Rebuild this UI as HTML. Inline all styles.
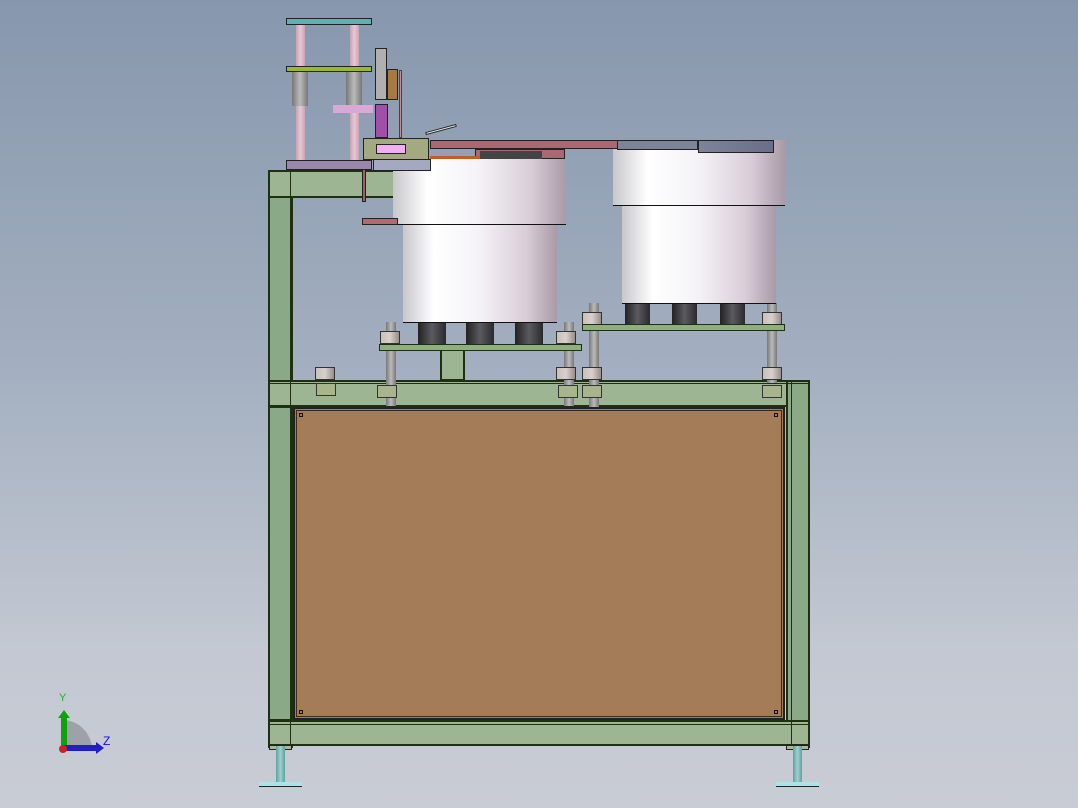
<!DOCTYPE html>
<html><head><style>
html,body{margin:0;padding:0}
body{width:1078px;height:808px;position:relative;overflow:hidden;background:linear-gradient(#8797ad 0%,#a3afc0 45%,#c3c8d2 80%,#c9ccd5 100%);font-family:"Liberation Sans",sans-serif}
.a{position:absolute;box-sizing:border-box}
.g{background:#9db592;border:2px solid #1f2f12}
.gd{background:#8aa987;border:2px solid #1f2f12}
.cyl{background:linear-gradient(90deg,#c8c8cc 0%,#fff 20%,#f4f2f6 50%,#d9cdd8 80%,#a89aa6 100%);border-bottom:1.5px solid #111}
.foot{background:linear-gradient(90deg,#222 0%,#5a5a60 50%,#2a2a2e 100%)}
.nut{background:linear-gradient(90deg,#c9c0bc,#d8d0cc 50%,#9a8c8c);border:1px solid #333}
.bolt{background:linear-gradient(90deg,#777,#bbb 50%,#777)}
.ln{position:absolute;background:#1f2f12}
</style></head><body>

<!-- frame -->
<div class="a gd" style="left:268px;top:170px;width:25px;height:578px"></div>
<div class="a g" style="left:268px;top:170px;width:130px;height:28px"></div>
<div class="a g" style="left:268px;top:380px;width:542px;height:27px"></div>
<div class="a gd" style="left:268px;top:406px;width:25px;height:315px"></div>
<div class="a gd" style="left:786px;top:380px;width:24px;height:368px"></div>
<div class="a g" style="left:268px;top:720px;width:542px;height:26px"></div>
<div class="ln" style="left:290px;top:172px;width:1px;height:574px"></div>
<div class="ln" style="left:270px;top:383px;width:538px;height:1px"></div>
<div class="ln" style="left:791px;top:382px;width:1px;height:364px"></div>
<div class="ln" style="left:270px;top:724px;width:538px;height:1px"></div>
<div class="a" style="left:293px;top:407px;width:492px;height:313px;background:#a47c58;border:2px solid #222"></div>
<div class="a" style="left:296px;top:410px;width:486px;height:307px;border:1px solid #3a2a18"></div>
<div class="a" style="left:299px;top:413px;width:4px;height:4px;border:1px solid #111"></div>
<div class="a" style="left:774px;top:413px;width:4px;height:4px;border:1px solid #111"></div>
<div class="a" style="left:299px;top:710px;width:4px;height:4px;border:1px solid #111"></div>
<div class="a" style="left:774px;top:710px;width:4px;height:4px;border:1px solid #111"></div>
<div class="a g" style="left:440px;top:345px;width:25px;height:36px"></div>

<!-- feet -->
<div class="a" style="left:269px;top:745px;width:23px;height:5px;border:1px solid #222;background:#a6b898"></div>
<div class="a" style="left:786px;top:745px;width:23px;height:5px;border:1px solid #222;background:#a6b898"></div>
<div class="a" style="left:276px;top:746px;width:9px;height:36px;background:linear-gradient(90deg,#5fa09e,#9fd0d0,#5fa09e)"></div>
<div class="a" style="left:259px;top:782px;width:43px;height:5px;background:#a9e4e8;border-bottom:1.5px solid #222"></div>
<div class="a" style="left:793px;top:746px;width:9px;height:36px;background:linear-gradient(90deg,#5fa09e,#9fd0d0,#5fa09e)"></div>
<div class="a" style="left:776px;top:782px;width:43px;height:5px;background:#a9e4e8;border-bottom:1.5px solid #222"></div>

<!-- bolts & nuts -->
<div class="a bolt" style="left:386px;top:322px;width:10px;height:84px"></div>
<div class="a bolt" style="left:564px;top:322px;width:10px;height:84px"></div>
<div class="a bolt" style="left:589px;top:303px;width:10px;height:104px"></div>
<div class="a bolt" style="left:767px;top:303px;width:10px;height:80px"></div>
<div class="a nut" style="left:380px;top:331px;width:20px;height:13px"></div>
<div class="a nut" style="left:556px;top:331px;width:20px;height:13px"></div>
<div class="a nut" style="left:582px;top:312px;width:20px;height:13px"></div>
<div class="a nut" style="left:762px;top:312px;width:20px;height:13px"></div>
<div class="a nut" style="left:315px;top:367px;width:20px;height:13px"></div>
<div class="a nut" style="left:556px;top:367px;width:20px;height:13px"></div>
<div class="a nut" style="left:582px;top:367px;width:20px;height:13px"></div>
<div class="a nut" style="left:762px;top:367px;width:20px;height:13px"></div>
<div class="a" style="left:316px;top:383px;width:20px;height:13px;background:#a8b48c;border:1px solid #333"></div>
<div class="a" style="left:377px;top:385px;width:20px;height:13px;background:#a8b48c;border:1px solid #333"></div>
<div class="a" style="left:558px;top:385px;width:20px;height:13px;background:#a8b48c;border:1px solid #333"></div>
<div class="a" style="left:582px;top:385px;width:20px;height:13px;background:#a8b48c;border:1px solid #333"></div>
<div class="a" style="left:762px;top:385px;width:20px;height:13px;background:#a8b48c;border:1px solid #333"></div>

<!-- left hopper -->
<div class="a foot" style="left:418px;top:321px;width:28px;height:24px"></div>
<div class="a foot" style="left:466px;top:321px;width:28px;height:24px"></div>
<div class="a foot" style="left:515px;top:321px;width:28px;height:24px"></div>
<div class="a g" style="left:379px;top:344px;width:203px;height:7px;background:#8fb07e;border-width:1.5px"></div>
<div class="a cyl" style="left:403px;top:224px;width:154px;height:99px"></div>
<div class="a cyl" style="left:393px;top:159px;width:173px;height:66px"></div>

<!-- right hopper -->
<div class="a foot" style="left:625px;top:302px;width:25px;height:24px"></div>
<div class="a foot" style="left:672px;top:302px;width:25px;height:24px"></div>
<div class="a foot" style="left:720px;top:302px;width:25px;height:24px"></div>
<div class="a g" style="left:582px;top:324px;width:203px;height:7px;background:#8fb07e;border-width:1.5px"></div>
<div class="a cyl" style="left:622px;top:204px;width:154px;height:100px"></div>
<div class="a cyl" style="left:613px;top:140px;width:172px;height:66px"></div>
<div class="a" style="left:617px;top:140px;width:81px;height:10px;background:#7c849a;border:1px solid #222"></div>
<div class="a" style="left:698px;top:140px;width:76px;height:13px;background:linear-gradient(90deg,#7c849a,#6a6e88);border:1px solid #222"></div>

<!-- rail -->
<div class="a" style="left:430px;top:140px;width:188px;height:9px;background:#a86a72;border:1px solid #222"></div>
<div class="a" style="left:475px;top:149px;width:90px;height:10px;background:#a86a72;border:1px solid #222"></div>
<div class="a" style="left:480px;top:151px;width:62px;height:8px;background:#444"></div>
<div class="a" style="left:430px;top:156px;width:50px;height:3px;background:#c06020"></div>
<div class="a" style="left:362px;top:218px;width:36px;height:7px;background:#b06a72;border:1px solid #222"></div>
<div class="a" style="left:362px;top:168px;width:4px;height:34px;background:#9a6266;border:1px solid #222"></div>

<!-- left mechanism -->
<div class="a" style="left:286px;top:18px;width:86px;height:7px;background:#5fb0b0;border:1px solid #222"></div>
<div class="a" style="left:296px;top:25px;width:9px;height:135px;background:linear-gradient(90deg,#c7a3b3,#e8c8d6,#c7a3b3)"></div>
<div class="a" style="left:350px;top:25px;width:9px;height:135px;background:linear-gradient(90deg,#c7a3b3,#e8c8d6,#c7a3b3)"></div>
<div class="a" style="left:286px;top:66px;width:86px;height:6px;background:#9ab830;border:1px solid #222"></div>
<div class="a" style="left:292px;top:72px;width:16px;height:34px;background:linear-gradient(90deg,#777,#bbb,#777)"></div>
<div class="a" style="left:346px;top:72px;width:16px;height:34px;background:linear-gradient(90deg,#777,#bbb,#777)"></div>
<div class="a" style="left:333px;top:105px;width:40px;height:8px;background:#d8a8d8"></div>
<div class="a" style="left:286px;top:160px;width:86px;height:10px;background:#9a88ac;border:1px solid #222"></div>
<div class="a" style="left:375px;top:48px;width:12px;height:52px;background:#b0b0b0;border:1px solid #222"></div>
<div class="a" style="left:387px;top:69px;width:11px;height:31px;background:#a87a40;border:1px solid #222"></div>
<div class="a" style="left:399px;top:70px;width:3px;height:68px;background:#c09090;border:1px solid #444"></div>
<div class="a" style="left:375px;top:104px;width:13px;height:34px;background:#a050a8;border:1px solid #222"></div>
<div class="a" style="left:363px;top:138px;width:66px;height:22px;background:#a4aa80;border:1px solid #222"></div>
<div class="a" style="left:376px;top:144px;width:30px;height:10px;background:#f0b0f0;border:1px solid #222"></div>
<div class="a" style="left:373px;top:159px;width:58px;height:12px;background:#a4a8c0;border:1px solid #222"></div>
<div class="a" style="left:425px;top:128px;width:32px;height:3px;background:#eee;border:1px solid #222;transform:rotate(-15deg)"></div>

<!-- triad -->
<svg class="a" style="left:50px;top:685px" width="70" height="70">
<path d="M14 63 L14 35 A30 30 0 0 1 42 63 Z" fill="#8e9098" opacity="0.7"/>
<rect x="11" y="32" width="6" height="31" fill="#10a010"/>
<polygon points="8,33 14,25 20,33" fill="#10a010"/>
<rect x="14" y="60" width="33" height="6" fill="#2020c0"/>
<polygon points="46,57 54,63 46,69" fill="#2020c0"/>
<circle cx="13" cy="64" r="4" fill="#d02020"/>
<text x="9" y="16" font-size="11" fill="#10c010">Y</text>
<text x="53" y="60" font-size="12" fill="#1010e0">Z</text>
</svg>
</body></html>
